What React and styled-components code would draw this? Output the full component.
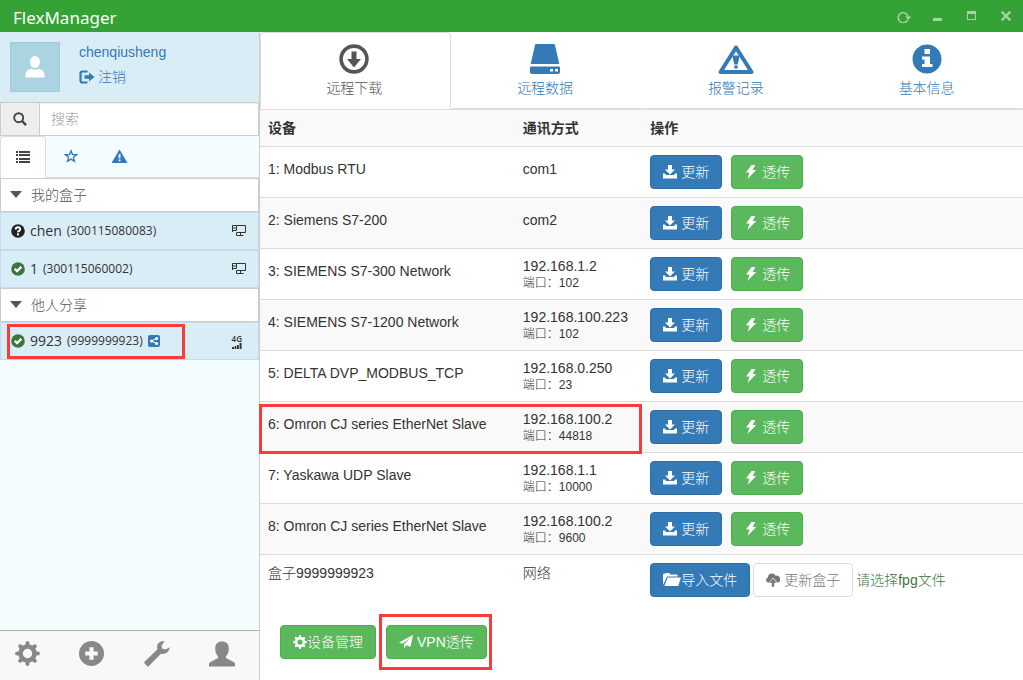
import React from "react";
import styled, { createGlobalStyle, css } from "styled-components";

const Global = createGlobalStyle`
  *, *::before, *::after { box-sizing: border-box; }
  body {
    margin: 0;
    font-family: "Liberation Sans", "Noto Sans CJK SC", sans-serif;
    font-size: 14px;
    font-weight: 300;
    line-height: 20px;
    color: #333;
    background: #fff;
  }
  button, input { font: inherit; color: inherit; margin: 0; }
  button { cursor: pointer; }
  svg { display: block; flex: none; }
`;

/* ---------- icons ---------- */

const Svg = ({ size = 14, w, box = "0 0 14 14", children }) => (
  <svg width={w || size} height={size} viewBox={box} fill="currentColor" aria-hidden="true">
    {children}
  </svg>
);

const teeth = [0, 45, 90, 135, 180, 225, 270, 315];

const icons = {
  refresh: (p) => (
    <Svg {...p} box="0 -2 14 14">
      <path d="M10.800 8.700A5 5 0 1 1 11.200 6" fill="none" stroke="currentColor" strokeWidth="1.500" />
      <path d="M8.200 5.600h6L11.200 9z" />
    </Svg>
  ),
  minus: (p) => <Svg {...p}><rect x="2" y="9" width="9" height="3" /></Svg>,
  square: (p) => (
    <Svg {...p}><path fillRule="evenodd" d="M2 2h9v9H2zM3 5v5h7V5z" /></Svg>
  ),
  times: (p) => (
    <Svg {...p}><path d="M2.600 2.600l8.800 8.800M11.400 2.600L2.600 11.400" stroke="currentColor" strokeWidth="2.200" /></Svg>
  ),
  person: (p) => (
    <Svg {...p} box="0 0 20 22">
      <ellipse cx="10" cy="6" rx="5" ry="6" />
      <path d="M.5 21.500V19c0-3.600 2.800-5.800 6-6.300 2 1.500 5 1.500 7 0 3.200.5 6 2.700 6 6.300v2.500z" />
    </Svg>
  ),
  logout: (p) => (
    <Svg {...p} box="0 0 16 14">
      <path d="M8.500 1.500H3.500q-2 0-2 2v7q0 2 2 2h5" fill="none" stroke="currentColor" strokeWidth="2.200" />
      <path d="M5.500 5.200h4.500V2.600L15.500 7 10 11.400V8.800H5.500z" />
    </Svg>
  ),
  search: (p) => (
    <Svg {...p}>
      <circle cx="5.700" cy="5.700" r="4.500" fill="none" stroke="currentColor" strokeWidth="1.900" />
      <path d="M8.900 8.900l4.200 4.200" stroke="currentColor" strokeWidth="2.400" />
    </Svg>
  ),
  list: (p) => (
    <Svg {...p}>
      <path d="M0 1h2v2H0zM3 1H14v2H3zM0 4h2v2H0zM3 4H14v2H3zM0 8h2v2H0zM3 8H14v2H3zM0 11h2v2H0zM3 11H14v2H3z" />
    </Svg>
  ),
  star: (p) => (
    <Svg {...p}>
      <path d="M7 1.800l1.500 3.700 4.100.2-3.200 2.600 1.100 4L7 10.100l-3.500 2.200 1.100-4L1.400 5.700l4.100-.2z" fill="none" stroke="currentColor" strokeWidth="1.300" />
    </Svg>
  ),
  warning: (p) => (
    <Svg {...p} box="0 0 18 16">
      <path fillRule="evenodd" d="M9 .5L17.500 15H.5zM7.800 5.500l.4 4.700h1.600l.4-4.700zM8 11.200v1.800h2v-1.800z" />
    </Svg>
  ),
  question: (p) => (
    <Svg {...p}>
      <circle cx="7" cy="7" r="6.800" />
      <path d="M4.700 5.600Q4.700 3.300 7 3.300T9.200 5.300Q9.200 6.500 8 7T7 8.400" fill="none" stroke="#fff" strokeWidth="1.900" />
      <rect x="6" y="9.400" width="2" height="2" fill="#fff" />
    </Svg>
  ),
  check: (p) => (
    <Svg {...p}>
      <circle cx="7" cy="7" r="6.800" />
      <path d="M3.800 6.900l2.300 2.300 4.200-4.300" fill="none" stroke="#fff" strokeWidth="2.300" />
    </Svg>
  ),
  monitor: (p) => (
    <Svg {...p} box="0 0 14 12">
      <path d="M4.500.5h9v7h-9M.5 7V.5h4v5h-4M.5 3h4M8.500 7.500v3M4.500 7.500v3h7" fill="none" stroke="currentColor" />
    </Svg>
  ),
  signal: (p) => (
    <Svg {...p} box="0 0 10 6">
      <path d="M0 4h2v2H0zM2.600 3h1.800v3H2.600zM5 2h1.800v4H5zM7.600 0h2v6h-2z" />
    </Svg>
  ),
  share: (p) => (
    <Svg {...p} box="0 0 12 12">
      <rect width="12" height="12" rx="2" />
      <path d="M8.500 3.500L3.500 6l5 2.500" fill="none" stroke="#fff" />
      <g fill="#fff"><circle cx="8.600" cy="3.400" r="1.500" /><circle cx="3.600" cy="6" r="1.600" /><circle cx="8.600" cy="8.600" r="1.500" /></g>
    </Svg>
  ),
  cog: (p) => (
    <Svg {...p} box="0 0 24 24">
      {teeth.map((a) => (
        <path key={a} transform={`rotate(${a} 12 12)`} d="M9.600 5l.9-4.500q1.500-.6 3 0L14.400 5z" />
      ))}
      <circle cx="12" cy="12" r="6.700" fill="none" stroke="currentColor" strokeWidth="4.400" />
    </Svg>
  ),
  plus: (p) => (
    <Svg {...p} box="0 0 24 24">
      <path fillRule="evenodd" d="M12 0a12 12 0 1 0 0 24 12 12 0 0 0 0-24zM10 6h4v4h4v4h-4v4h-4v-4H6v-4h4z" />
    </Svg>
  ),
  wrench: (p) => (
    <Svg {...p} box="0 0 26 26">
      <path d="M20.500.3c-5-.8-8.600 2.800-7 8L.8 20.600q-1 1 0 2l2.100 2.300q1 1 2 0L17 12.800c4 1 8.200-1.500 8.700-6.500l-4.100 2.200-3.500-1.100-.6-2.600z" />
    </Svg>
  ),
  user: (p) => (
    <Svg {...p} box="0 0 26 25">
      <path d="M13 0c4.300 0 6.800 2.600 6.800 6.800 0 3.500-1 6.200-2.800 8v1.700l8 4.300q1 .7 1 2V25H0v-2.200q0-1.300 1-2l8-4.300v-1.700c-1.800-1.800-2.800-4.500-2.800-8C6.200 2.600 8.700 0 13 0z" />
    </Svg>
  ),
  download: (p) => (
    <Svg {...p} box="0 0 30 30">
      <circle cx="15" cy="15" r="12.900" fill="none" stroke="currentColor" strokeWidth="3.600" />
      <path d="M12.500 7.500h5V15H22l-7 8.500L8 15h4.500z" />
    </Svg>
  ),
  disk: (p) => (
    <Svg {...p} box="0 0 30 30">
      <path d="M6.200 0h17.600q1 0 1.200 1l4.300 19H.7L5 1q.2-1 1.200-1z" />
      <path fillRule="evenodd" d="M1 22.500h28q1 0 1 1V28q0 2-2 2H2q-2 0-2-2v-4.500q0-1 1-1zM20 25v2.500h3V25zM25 25v2.500h3V25z" />
    </Svg>
  ),
  alarm: (p) => (
    <Svg {...p} box="0 0 36 30">
      <path d="M18 3.500L33.500 28h-31z" fill="none" stroke="currentColor" strokeWidth="4" strokeLinejoin="round" />
      <path d="M14.200 11.500h7.600L19.700 20.500h-3.400zM16.300 21.500h3.400v3h-3.400z" />
    </Svg>
  ),
  info: (p) => (
    <Svg {...p} box="0 0 30 30">
      <path fillRule="evenodd" d="M15 .5a14.500 14.500 0 1 0 0 29 14.500 14.500 0 0 0 0-29zM12.500 5H18v5h-5.500zM10 12.500h8V20h2.500v3H10v-3h2.500v-4.500H10z" />
    </Svg>
  ),
  save: (p) => (
    <Svg {...p}>
      <path d="M5 0h4v4.500h3L7 9.500 2 4.500h3z" />
      <path d="M0 8.500h2l1 1.500h8l1-1.500h2V13.500H0z" />
    </Svg>
  ),
  flash: (p) => <Svg {...p}><path d="M7.500 0h3.800L8.700 5h3.500L3.500 14l2-6.500H2z" /></Svg>,
  folder: (p) => (
    <Svg {...p} box="0 0 18 14">
      <path d="M0 12V1.500q0-.8.8-.8h1L2.600 0h3.600l1 1.500h6.600q.9 0 .9.900v1H4.200z" />
      <path d="M4.700 4.500H18L15.200 13H1.400z" />
    </Svg>
  ),
  cloud: (p) => (
    <Svg {...p}>
      <path d="M2.700 9.700A2.700 2.700 0 0 1 2 4.400 4 4 0 0 1 9.600 2.700 3.500 3.500 0 0 1 11.500 9.700L7 4.600z" />
      <path d="M7 5.600l3.800 4.200H8.200v4H5.800v-4H3.200z" />
    </Svg>
  ),
  plane: (p) => <Svg {...p}><path d="M14 0l-2.500 12-4-1.800L5 13.500V9.500l6-6.500-7.400 5.800L0 7.500z" /></Svg>,
};

const Icon = ({ name, ...p }) => icons[name](p);

/* ---------- frame ---------- */

const Page = styled.div`
  min-height: 100vh;
  display: flex;
  flex-direction: column;
`;

const TitleBar = styled.header`
  display: flex;
  align-items: center;
  height: 32px;
  padding: 0 10px 0 13px;
  background: #35a235;
  color: #fff;
`;

const AppName = styled.h1`
  flex: 1;
  margin: 0;
  padding-top: 4px;
  font: 400 17px/24px "Noto Sans", sans-serif;
`;

const WindowButtons = styled.div`
  display: flex;
  gap: 20px;
  color: #a3d4a3;
`;

const IconButton = styled.button`
  display: flex;
  padding: 0;
  border: 0;
  background: none;
`;

const Body = styled.div`
  flex: 1;
  display: flex;
`;

/* ---------- sidebar ---------- */

const Sidebar = styled.aside`
  width: 260px;
  flex: none;
  display: flex;
  flex-direction: column;
  border-right: 1px solid #ccc;
  background: #f3fcff;
`;

const Profile = styled.div`
  display: flex;
  gap: 19px;
  height: 70px;
  padding: 10px;
  background: #d9edf7;
`;

const Avatar = styled.div`
  display: grid;
  place-items: center;
  width: 50px;
  height: 50px;
  border: 1px solid #9fcbd9;
  background: #abd4e2;
  color: #fff;
`;

const ProfileLinks = styled.div`
  display: flex;
  flex-direction: column;
  gap: 5px;
`;

const TextLink = styled.a`
  display: flex;
  align-items: center;
  gap: 3px;
  color: #337ab7;
  text-decoration: none;
`;

const SearchBar = styled.label`
  display: flex;
  height: 34px;
  border: 1px solid #ccc;
`;

const SearchAddon = styled.span`
  display: grid;
  place-items: center;
  width: 39px;
  border-right: 1px solid #ccc;
  background: #eee;
  color: #444;
`;

const SearchInput = styled.input`
  flex: 1;
  min-width: 0;
  padding: 0 11px;
  border: 0;
  background: #fff;
  box-shadow: inset 0 1px 1px rgba(0, 0, 0, 0.075);
  &::placeholder { color: #999; opacity: 1; }
`;

const SideTabs = styled.div`
  display: flex;
  height: 42px;
  border-bottom: 1px solid #ddd;
`;

const SideTab = styled.button`
  display: flex;
  align-items: center;
  justify-content: center;
  width: 49px;
  margin-bottom: -1px;
  padding: 0 0 2px;
  border: 0;
  background: none;
  color: #337ab7;
  ${(p) => p.$active && css`
    width: 46px;
    border: 1px solid #ddd;
    border-bottom: 0;
    border-radius: 4px 4px 0 0;
    background: #fff;
    color: #444;
  `}
`;

const GroupHeader = styled.button`
  display: flex;
  align-items: center;
  gap: 9px;
  height: 34px;
  padding: 0 9px;
  border: 1px solid #ccc;
  background: #fff;
  color: #555;
  text-align: left;
  &::before {
    content: "";
    border: 6px solid transparent;
    border-top: 7px solid #555;
    border-bottom: 0;
    margin-bottom: 2px;
  }
`;

const BoxRow = styled.a`
  position: relative;
  display: flex;
  align-items: center;
  gap: 5px;
  height: 38px;
  padding: 0 12px 0 10px;
  border: 1px solid #c6d9ee;
  background: #d9edf7;
  color: #333;
  font-family: "Open Sans", sans-serif;
  font-weight: 400;
  text-decoration: none;
`;

const StatusIcon = styled.span`color: ${(p) => p.$color};`;
const BoxId = styled.span`font-size: 12px;`;
const ShareIcon = styled.span`color: #337ab7;`;
const LinkType = styled.span`
  display: grid;
  justify-items: center;
  margin-left: auto;
  font: 600 8px/8px "Open Sans", sans-serif;
  ${(p) => p.$narrow && "padding: 2px 4px 0 0;"}
`;

const Highlight = styled.span`
  position: absolute;
  inset: ${(p) => p.$inset};
  border: 3px solid #fb3a3a;
  pointer-events: none;
  z-index: 1;
`;

const BottomBar = styled.nav`
  display: flex;
  align-items: center;
  justify-content: space-between;
  margin-top: auto;
  height: 50px;
  padding: 0 24px 4px 15px;
  border-top: 1px solid #aaa;
  background: #f8f8f8;
  color: #888;
`;

/* ---------- main ---------- */

const Main = styled.main`
  flex: 1;
  min-width: 0;
  background: #fff;
`;

const NavTabs = styled.div`
  display: grid;
  grid-template-columns: repeat(4, 1fr);
  height: 77px;
`;

const NavTab = styled.button`
  display: flex;
  flex-direction: column;
  align-items: center;
  gap: 4px;
  padding: 11px 2px 0 0;
  border: 1px solid transparent;
  border-bottom-color: #ddd;
  background: #fff;
  color: #337ab7;
  ${(p) => p.$active && css`
    border-color: #ddd #ddd transparent;
    border-radius: 4px 4px 0 0;
    color: #555;
  `}
`;

const DeviceTable = styled.table`
  width: 100%;
  table-layout: fixed;
  border-collapse: collapse;
`;

const HeadCell = styled.th`
  width: ${(p) => p.$width};
  height: 37px;
  padding: 0 8px;
  border-top: 1px solid #ddd;
  background: #f9f9f9;
  text-align: left;
  font-weight: 700;
`;

const DeviceRow = styled.tr`
  position: relative;
  border-top: 1px solid #ddd;
  background: ${(p) => (p.$striped ? "#f9f9f9" : "#fff")};
`;

const Cell = styled.td`
  padding: 8px;
  vertical-align: top;
  line-height: ${(p) => p.$line || 28}px;
`;

const Port = styled.div`
  font-size: 12px;
  line-height: 16px;
`;

const Actions = styled.div`
  display: flex;
  align-items: center;
  gap: ${(p) => p.$gap}px;
`;

const tones = {
  primary: ["#337ab7", "#2e6da4", "#fff"],
  success: ["#5cb85c", "#4cae4c", "#fff"],
  plain: ["#fff", "#ddd", "#777"],
};

const Button = styled.button`
  display: flex;
  align-items: center;
  gap: ${(p) => (p.$tight ? 0 : 4)}px;
  height: 34px;
  padding: 0 12px;
  border: 1px solid ${(p) => tones[p.$tone][1]};
  border-radius: 4px;
  background: ${(p) => tones[p.$tone][0]};
  color: ${(p) => tones[p.$tone][2]};
  line-height: 20px;
  white-space: nowrap;
`;

const Hint = styled.span`
  color: #3c763d;
  line-height: 20px;
`;

const Footer = styled.div`
  display: flex;
  gap: 10px;
  padding: 20px;
`;

const Marked = styled.div`position: relative;`;

const devices = [
  ["Modbus RTU", "com1"],
  ["Siemens S7-200", "com2"],
  ["SIEMENS S7-300 Network", "192.168.1.2", 102],
  ["SIEMENS S7-1200 Network", "192.168.100.223", 102],
  ["DELTA DVP_MODBUS_TCP", "192.168.0.250", 23],
  ["Omron CJ series EtherNet Slave", "192.168.100.2", 44818],
  ["Yaskawa UDP Slave", "192.168.1.1", 10000],
  ["Omron CJ series EtherNet Slave", "192.168.100.2", 9600],
];

const tabs = [
  ["download", "远程下载", 30],
  ["disk", "远程数据", 30],
  ["alarm", "报警记录", 36],
  ["info", "基本信息", 30],
];

const windowButtons = [
  ["refresh", "刷新"],
  ["minus", "最小化"],
  ["square", "最大化"],
  ["times", "关闭"],
];

const bottomButtons = [
  ["cog", "设置", 25],
  ["plus", "添加", 25],
  ["wrench", "工具", 26],
  ["user", "用户", 26],
];

function Box({ status, color, name, id, shared, children }) {
  return (
    <BoxRow href="#">
      <StatusIcon $color={color}><Icon name={status} /></StatusIcon>
      <span>{name}</span>
      <BoxId>({id})</BoxId>
      {shared && <ShareIcon><Icon name="share" size={12} /></ShareIcon>}
      {children}
      {shared && <Highlight $inset="1px 73px 0 6px" />}
    </BoxRow>
  );
}

export default function App() {
  return (
    <Page>
      <Global />
      <TitleBar>
        <AppName>FlexManager</AppName>
        <WindowButtons>
          {windowButtons.map(([icon, label]) => (
            <IconButton key={icon} aria-label={label}><Icon name={icon} /></IconButton>
          ))}
        </WindowButtons>
      </TitleBar>
      <Body>
        <Sidebar>
          <Profile>
            <Avatar><Icon name="person" size={22} w={20} /></Avatar>
            <ProfileLinks>
              <TextLink href="#">chenqiusheng</TextLink>
              <TextLink href="#"><Icon name="logout" w={16} />注销</TextLink>
            </ProfileLinks>
          </Profile>
          <SearchBar>
            <SearchAddon><Icon name="search" /></SearchAddon>
            <SearchInput type="text" placeholder="搜索" aria-label="搜索" />
          </SearchBar>
          <SideTabs>
            <SideTab $active aria-label="列表"><Icon name="list" /></SideTab>
            <SideTab aria-label="收藏"><Icon name="star" /></SideTab>
            <SideTab aria-label="报警"><Icon name="warning" size={15} w={17} /></SideTab>
          </SideTabs>
          <GroupHeader>我的盒子</GroupHeader>
          <Box status="question" color="#222" name="chen" id="300115080083">
            <LinkType><Icon name="monitor" size={12} w={14} /></LinkType>
          </Box>
          <Box status="check" color="#3c763d" name="1" id="300115060002">
            <LinkType><Icon name="monitor" size={12} w={14} /></LinkType>
          </Box>
          <GroupHeader>他人分享</GroupHeader>
          <Box status="check" color="#3c763d" name="9923" id="9999999923" shared>
            <LinkType $narrow>4G<Icon name="signal" size={6} w={10} /></LinkType>
          </Box>
          <BottomBar>
            {bottomButtons.map(([icon, label, size]) => (
              <IconButton key={icon} aria-label={label}><Icon name={icon} size={size} /></IconButton>
            ))}
          </BottomBar>
        </Sidebar>
        <Main>
          <NavTabs>
            {tabs.map(([icon, label, w], i) => (
              <NavTab key={icon} $active={i === 0}>
                <Icon name={icon} size={30} w={w} />
                {label}
              </NavTab>
            ))}
          </NavTabs>
          <DeviceTable>
            <thead>
              <tr>
                <HeadCell $width="33.4%">设备</HeadCell>
                <HeadCell $width="16.7%">通讯方式</HeadCell>
                <HeadCell>操作</HeadCell>
              </tr>
            </thead>
            <tbody>
              {devices.map(([name, address, port], i) => (
                <DeviceRow key={i} $striped={i % 2 === 1}>
                  <Cell>
                    {i + 1}: {name}
                    {i === 5 && <Highlight $inset="1px 50% -1px -1px" />}
                  </Cell>
                  <Cell $line={port ? 18 : 28}>
                    {address}
                    {port && <Port>端口：{port}</Port>}
                  </Cell>
                  <Cell>
                    <Actions $gap={9}>
                      <Button $tone="primary"><Icon name="save" />更新</Button>
                      <Button $tone="success"><Icon name="flash" />透传</Button>
                    </Actions>
                  </Cell>
                </DeviceRow>
              ))}
              <DeviceRow>
                <Cell $line={20}>盒子9999999923</Cell>
                <Cell $line={20}>网络</Cell>
                <Cell>
                  <Actions $gap={3}>
                    <Button $tone="primary" $tight><Icon name="folder" w={18} />导入文件</Button>
                    <Button $tone="plain"><Icon name="cloud" />更新盒子</Button>
                    <Hint>请选择fpg文件</Hint>
                  </Actions>
                </Cell>
              </DeviceRow>
            </tbody>
          </DeviceTable>
          <Footer>
            <Button $tone="success" $tight><Icon name="cog" />设备管理</Button>
            <Marked>
              <Button $tone="success"><Icon name="plane" />VPN透传</Button>
              <Highlight $inset="-11px -5px -11px -7px" />
            </Marked>
          </Footer>
        </Main>
      </Body>
    </Page>
  );
}
